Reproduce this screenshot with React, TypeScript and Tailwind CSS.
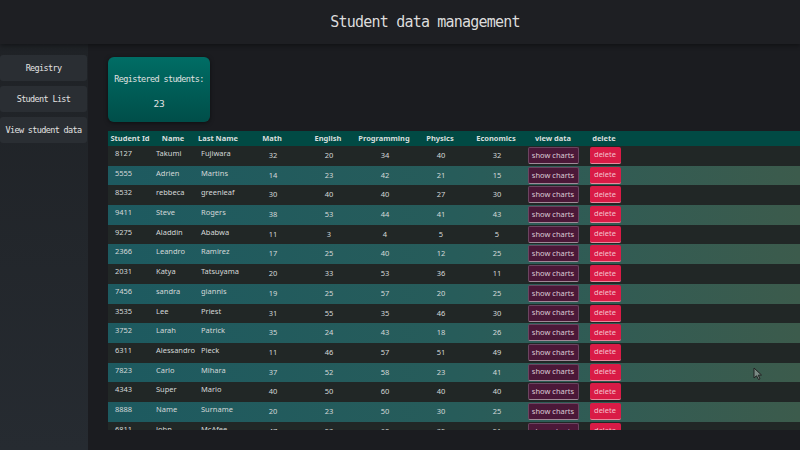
import React from "react";

const rows: [string, string, string, number, number, number, number, number][] = [
  ["8127", "Takumi", "Fujiwara", 32, 20, 34, 40, 32],
  ["5555", "Adrien", "Martins", 14, 23, 42, 21, 15],
  ["8532", "rebbeca", "greenleaf", 30, 40, 40, 27, 30],
  ["9411", "Steve", "Rogers", 38, 53, 44, 41, 43],
  ["9275", "Aladdin", "Ababwa", 11, 3, 4, 5, 5],
  ["2366", "Leandro", "Ramirez", 17, 25, 40, 12, 25],
  ["2031", "Katya", "Tatsuyama", 20, 33, 53, 36, 11],
  ["7456", "sandra", "giannis", 19, 25, 57, 20, 25],
  ["3535", "Lee", "Priest", 31, 55, 35, 46, 30],
  ["3752", "Larah", "Patrick", 35, 24, 43, 18, 26],
  ["6311", "Alessandro", "Pieck", 11, 46, 57, 51, 49],
  ["7823", "Carlo", "Mihara", 37, 52, 58, 23, 41],
  ["4343", "Super", "Mario", 40, 50, 60, 40, 40],
  ["8888", "Name", "Surname", 20, 23, 50, 30, 25],
  ["6811", "John", "McAfee", 47, 53, 60, 35, 51],
];

const mono = { fontFamily: '"DejaVu Sans Mono", monospace' };
const sans = { fontFamily: '"Noto Sans", sans-serif' };

export default function App() {
  return (
    <div className="w-[800px] h-[450px] flex flex-col bg-[#1b1c20] overflow-hidden relative">
      <header
        className="h-[44px] flex items-center justify-center bg-[#1e1f23] shadow-[0_2px_4px_rgba(0,0,0,0.35)] z-10"
        style={mono}
      >
        <h1 className="text-[15px] tracking-[-0.8px] text-[#dcdcdc] pl-[50px]">Student data management</h1>
      </header>
      <div className="flex flex-1 min-h-0">
        <aside
          className="w-[88px] flex flex-col gap-[5px] pt-[11px] bg-gradient-to-b from-[#1f2226] to-[#262b31]"
          style={mono}
        >
          {["Registry", "Student List", "View student data"].map((t) => (
            <div
              key={t}
              className="h-[26px] w-[87px] rounded-[3px] bg-[#2a2e33] flex items-center justify-center text-[8.5px] tracking-[-0.65px] text-[#e2e2e2]"
            >
              {t}
            </div>
          ))}
        </aside>
        <main className="flex-1 flex flex-col pl-[20px] pt-[13px] min-w-0">
          <div
            className="w-[102px] h-[65px] rounded-[6px] bg-gradient-to-b from-[#006d65] to-[#004e49] flex flex-col items-center shadow-[0_1px_4px_rgba(0,0,0,0.5)]"
            style={mono}
          >
            <div className="mt-[16px] text-[8.5px] tracking-[-0.65px] text-[#e2e2e2]">Registered students:</div>
            <div className="mt-[11px] text-[9.5px] tracking-[-0.3px] text-[#e2e2e2]">23</div>
          </div>
          <div className="mt-[9px] h-[299px] overflow-hidden" style={sans}>
            <div className="h-[15px] bg-[#014a44] flex items-center text-[7.5px] font-bold text-[#d8dedd]">
              <div className="w-[44px] text-center">Student Id</div>
              <div className="w-[42px] text-center">Name</div>
              <div className="w-[50px] text-center pr-[2px]">Last Name</div>
              <div className="w-[56px] text-center">Math</div>
              <div className="w-[56px] text-center">English</div>
              <div className="w-[56px] text-center">Programming</div>
              <div className="w-[56px] text-center">Physics</div>
              <div className="w-[56px] text-center">Economics</div>
              <div className="w-[58px] text-center">view data</div>
              <div className="w-[44px] text-center">delete</div>
            </div>
            {rows.map((r, i) => (
              <div
                key={r[0]}
                className={
                  "h-[19.7px] flex text-[7.5px] text-[#d4d8d8] " +
                  (i % 2 === 1
                    ? "bg-gradient-to-r from-[#1d5a60] via-[#275c5a] to-[#3c5b4c]"
                    : "bg-[#212726]")
                }
              >
                <div className="w-[44px] pl-[7px] pt-[2px]">{r[0]}</div>
                <div className="w-[42px] pl-[4px] pt-[2px]">{r[1]}</div>
                <div className="w-[50px] pl-[7px] pt-[2px]">{r[2]}</div>
                {[r[3], r[4], r[5], r[6], r[7]].map((n, k) => (
                  <div key={k} className="w-[56px] text-center pt-[4px] pl-[2px]">
                    {n}
                  </div>
                ))}
                <div className="w-[58px] flex justify-center pt-[1px]">
                  <div className="h-[17px] w-[51px] rounded-[2px] bg-[#4b1838] border border-[#6b4460] border-b-[#a08a98] flex items-center justify-center text-[7.5px] text-[#dccbd5]">
                    show charts
                  </div>
                </div>
                <div className="w-[44px] flex justify-center pt-[1px] pl-[2px]">
                  <div className="h-[17px] w-[31px] rounded-[2px] bg-[#d91b46] border-b border-[#e88a9e] flex items-center justify-center text-[7.5px] text-[#f4c0cc]">
                    delete
                  </div>
                </div>
              </div>
            ))}
          </div>
        </main>
      </div>
      <svg className="absolute left-[753px] top-[367px]" width="10" height="14" viewBox="0 0 10 14">
        <path d="M1 1 L1 11 L3.5 8.8 L5.5 12.5 L7 11.8 L5.2 8.2 L8.5 8 Z" fill="#7a8a84" stroke="#222" strokeWidth="1" />
      </svg>
    </div>
  );
}
